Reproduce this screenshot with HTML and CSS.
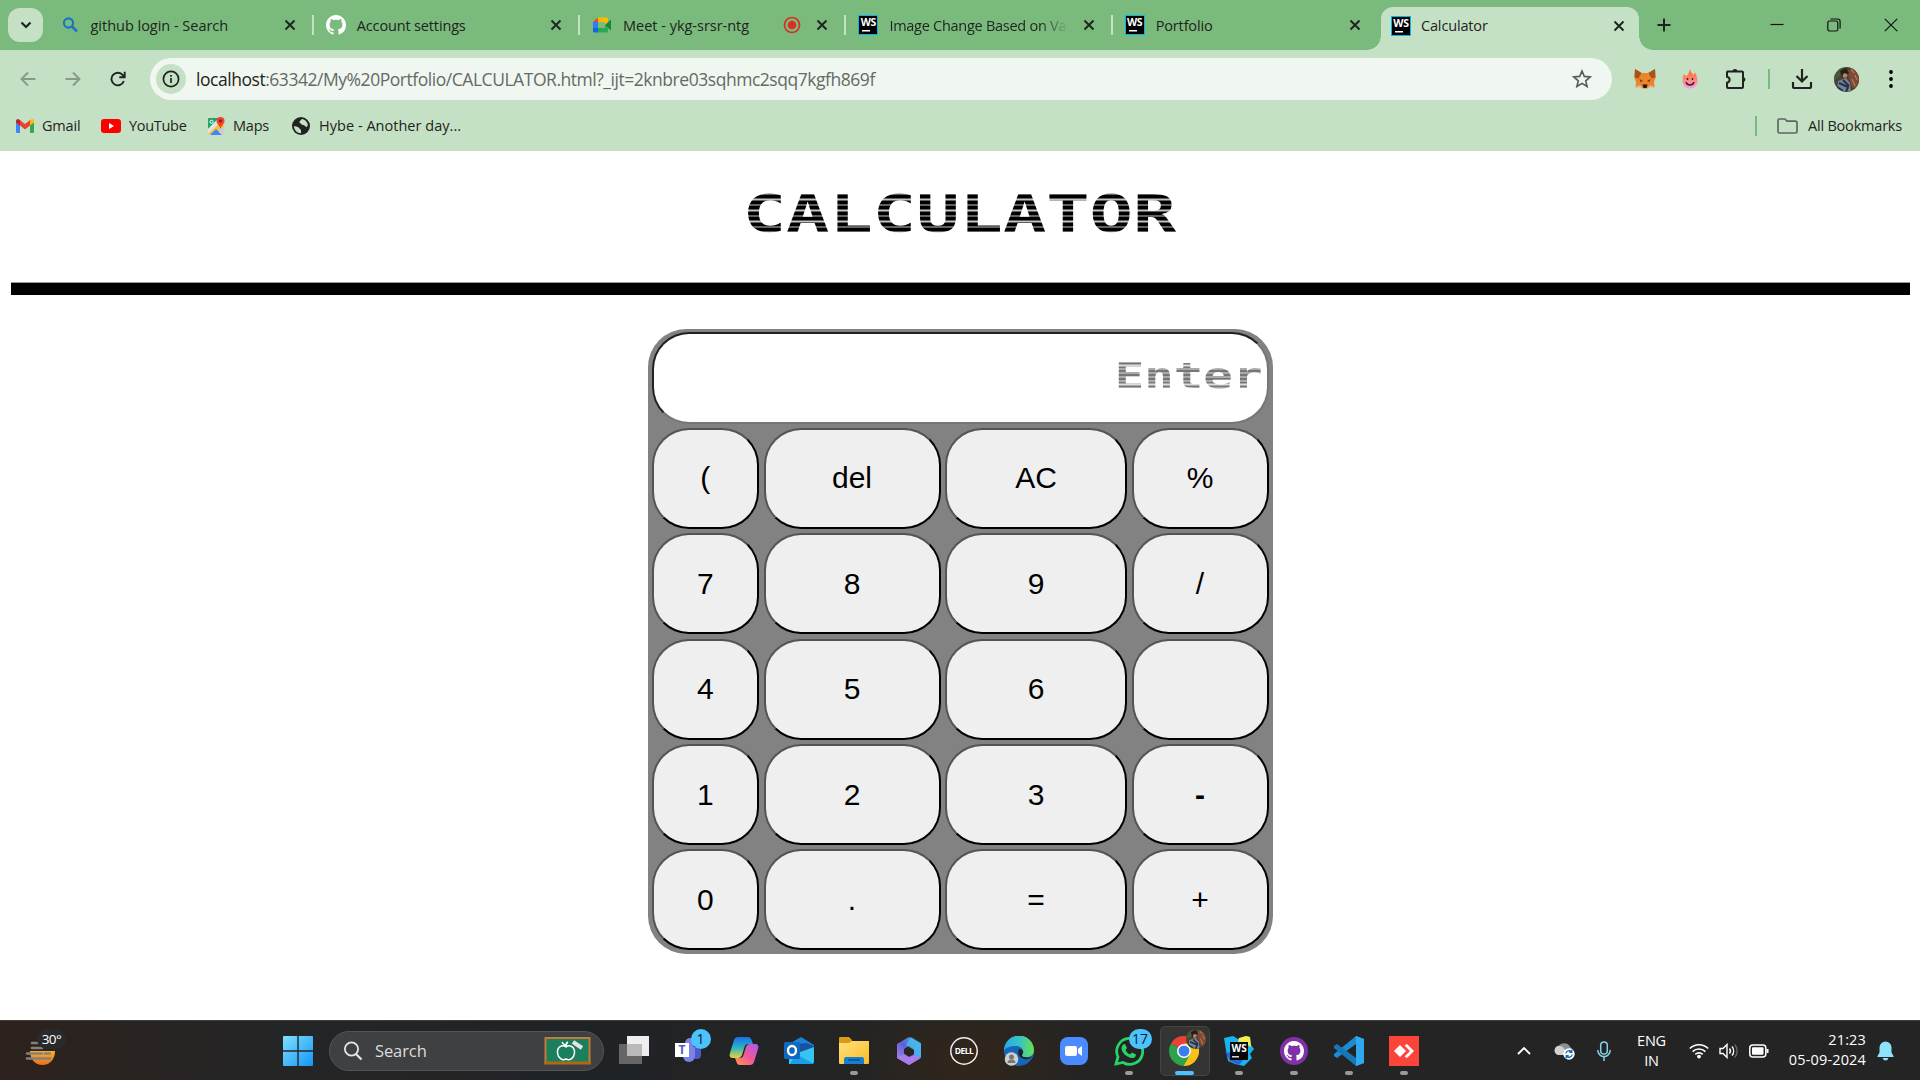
FILE: index.html
```html
<!DOCTYPE html>
<html lang="en">
<head>
<meta charset="utf-8">
<title>Calculator</title>
<link rel="stylesheet" href="styles.css">
</head>
<body>
<svg class="defs" width="0" height="0">
  <defs>
    <symbol id="x" viewBox="0 0 12 12"><path d="M1.5 1.5l9 9M10.5 1.5l-9 9" stroke="#1f2420" stroke-width="1.9" fill="none"/></symbol>
    <symbol id="octocat" viewBox="0 0 16 16"><path d="M8 0C3.58 0 0 3.58 0 8c0 3.54 2.29 6.53 5.47 7.59.4.07.55-.17.55-.38 0-.19-.01-.82-.01-1.49-2.01.37-2.53-.49-2.69-.94-.09-.23-.48-.94-.82-1.13-.28-.15-.68-.52-.01-.53.63-.01 1.08.58 1.23.82.72 1.21 1.87.87 2.33.66.07-.52.28-.87.51-1.07-1.78-.2-3.64-.89-3.64-3.95 0-.87.31-1.59.82-2.15-.08-.2-.36-1.02.08-2.12 0 0 .67-.21 2.2.82.64-.18 1.32-.27 2-.27s1.36.09 2 .27c1.53-1.04 2.2-.82 2.2-.82.44 1.1.16 1.92.08 2.12.51.56.82 1.27.82 2.15 0 3.07-1.87 3.75-3.65 3.95.29.25.54.73.54 1.48 0 1.07-.01 1.93-.01 2.2 0 .21.15.46.55.38A8.01 8.01 0 0016 8c0-4.42-3.58-8-8-8z"/></symbol>
    <linearGradient id="win" x1="0" y1="0" x2="1" y2="1"><stop offset="0" stop-color="#7fe0ff"/><stop offset="1" stop-color="#1296f5"/></linearGradient>
    <linearGradient id="flame" x1="0" y1="0" x2="0" y2="1"><stop offset="0" stop-color="#ff6a1a"/><stop offset=".5" stop-color="#ff8470"/><stop offset="1" stop-color="#ff9ee0"/></linearGradient>
    <linearGradient id="cpA" x1="0" y1="0" x2="0" y2="1"><stop offset="0" stop-color="#1c6fe8"/><stop offset=".5" stop-color="#28b4c8"/><stop offset="1" stop-color="#e8d332"/></linearGradient>
    <linearGradient id="cpB" x1="1" y1="0" x2="0" y2="1"><stop offset="0" stop-color="#a55cf0"/><stop offset=".5" stop-color="#f0569a"/><stop offset="1" stop-color="#ff9a4c"/></linearGradient>
    <linearGradient id="edgeA" x1="0" y1="0" x2="1" y2="0"><stop offset="0" stop-color="#2aa6ea"/><stop offset=".5" stop-color="#36c3c9"/><stop offset="1" stop-color="#68e04e"/></linearGradient>
    <linearGradient id="m3" x1="0" y1="1" x2="1" y2="0"><stop offset="0" stop-color="#b98af0"/><stop offset=".5" stop-color="#5a62d6"/><stop offset="1" stop-color="#3ec7f2"/></linearGradient>
    <linearGradient id="fold" x1="0" y1="0" x2="1" y2="1"><stop offset="0" stop-color="#ffe07a"/><stop offset="1" stop-color="#fbbd28"/></linearGradient>
    <linearGradient id="sun" x1="0" y1="0" x2="0" y2="1"><stop offset="0" stop-color="#f5b52a"/><stop offset="1" stop-color="#ee6f1c"/></linearGradient>
    <clipPath id="round"><circle cx="12.5" cy="12.5" r="12.5"/></clipPath>
    <symbol id="photo" viewBox="0 0 25 25"><g clip-path="url(#round)"><rect width="25" height="25" fill="#4d4030"/><path d="M0 0h9l-3 9-6 5z" fill="#48583a"/><path d="M14 3h11v20l-7-3-3-9z" fill="#7d4a36"/><path d="M6 4l6-3 3 5-7 4z" fill="#242018"/><circle cx="11" cy="8.500" r="2.300" fill="#b98464"/><path d="M4 14l8-3 4 5 1 9H3z" fill="#71809b"/><path d="M5 16l9 4-2 5M9 13l6 6M3 20l6 4" stroke="#2a3040" stroke-width="2" fill="none"/><path d="M17 2l3 4M21 8l2 5M18 12l3 7" stroke="#b5785a" stroke-width="1.300"/></g></symbol>
  </defs>
</svg>

<header class="browser">
  <div class="tabstrip">
    <div class="tab-search"><svg width="12" height="8" viewBox="0 0 12 8"><path d="M1.500 1.500L6 6l4.500-4.500" fill="none" stroke="#1f2420" stroke-width="2.200"/></svg></div>
    <div class="tab first"><svg class="fav" viewBox="0 0 20 20"><circle cx="8.500" cy="8" r="4.600" fill="none" stroke="#1a73c9" stroke-width="2.100"/><path d="M12 11.500l5 5" stroke="#1a73c9" stroke-width="2.500"/></svg><span class="title wide">github login - Search</span><svg class="close"><use href="#x"/></svg></div>
    <div class="tab"><svg class="fav" viewBox="0 0 16 16"><use href="#octocat" fill="#fff"/></svg><span class="title">Account settings</span><svg class="close"><use href="#x"/></svg></div>
    <div class="tab"><svg class="fav" viewBox="0 0 20 20"><path d="M1 7l5-4.500V7z" fill="#ea4335"/><path d="M6 2.500h8.500a1.500 1.500 0 011.500 1.500v4l-3 2V7H6z" fill="#ffba00"/><path d="M1 7h5v6H1z" fill="#2f7cf6"/><path d="M1 13h5v4.500H2.500A1.500 1.500 0 011 16z" fill="#1565e0"/><path d="M6 13h7v-3l3 3v3a1.500 1.500 0 01-1.500 1.500H6z" fill="#2aa952"/><path d="M13 10l6-5.500v11z" fill="#128a3c"/></svg><span class="title wide">Meet - ykg-srsr-ntg</span><svg class="rec" viewBox="0 0 18 18"><circle cx="9" cy="9" r="7.500" fill="none" stroke="#d93025" stroke-width="1.700"/><circle cx="9" cy="9" r="4.300" fill="#d93025"/></svg><svg class="close"><use href="#x"/></svg></div>
    <div class="tab"><span class="ws">WS</span><span class="title fade">Image Change Based on Va</span><svg class="close"><use href="#x"/></svg></div>
    <div class="tab"><span class="ws">WS</span><span class="title">Portfolio</span><svg class="close"><use href="#x"/></svg></div>
    <div class="tab active"><span class="ws">WS</span><span class="title">Calculator</span><svg class="close"><use href="#x"/></svg></div>
    <svg class="plus" width="14" height="14" viewBox="0 0 14 14"><path d="M7 .5v13M.5 7h13" stroke="#1f2420" stroke-width="2"/></svg>
    <div class="window-buttons">
      <svg width="14" height="14" viewBox="0 0 14 14"><path d="M.5 6.500h13" stroke="#111" stroke-width="1.200"/></svg>
      <svg width="14" height="14" viewBox="0 0 14 14"><g fill="none" stroke="#111" stroke-width="1.200"><rect x=".8" y="3" width="10" height="10" rx="1.800"/><path d="M3.500 1h7a2.600 2.600 0 012.600 2.600v7"/></g></svg>
      <svg width="14" height="14" viewBox="0 0 14 14"><path d="M.8.8l12.400 12.400M13.200.8L.8 13.200" stroke="#111" stroke-width="1.200"/></svg>
    </div>
  </div>

  <div class="toolbar">
    <svg class="nav dim" viewBox="0 0 16 16"><path d="M15.500 8H1.500M8 1.500L1.500 8 8 14.500" /></svg>
    <svg class="nav dim" viewBox="0 0 16 16"><path d="M.5 8h14M8 1.500L14.500 8 8 14.500"/></svg>
    <svg class="nav" viewBox="0 0 16 16"><path d="M13.800 10A6.300 6.300 0 1 1 12.800 4.200L14.500 6M14.700.8V6.200H9.300"/></svg>
    <div class="omnibox">
      <span class="info"><svg width="18" height="18" viewBox="0 0 18 18"><circle cx="9" cy="9" r="7.600" fill="none" stroke="#1f2420" stroke-width="1.700"/><path d="M9 8v5M9 5v1.800" stroke="#1f2420" stroke-width="1.700"/></svg></span>
      <span class="url"><b>localhost</b>:63342/My%20Portfolio/CALCULATOR.html?_ijt=2knbre03sqhmc2sqq7kgfh869f</span>
      <svg class="star" width="20" height="20" viewBox="0 0 20 20"><path d="M10 2l2.300 5.400 5.900.5-4.500 3.900 1.400 5.700-5.100-3.100-5.100 3.100 1.400-5.700L1.800 7.900l5.900-.5z" fill="none" stroke="#555b56" stroke-width="1.600"/></svg>
    </div>
    <div class="extensions">
      <svg class="fox" width="22" height="22" viewBox="0 0 22 22"><path d="M1 1l7 4h6l7-4 .5 9-1.500 4 .5 5.500-5-1-2 2h-5l-2-2-5 1 .5-5.500L.5 10z" fill="#ee8429"/><path d="M1 1l6.500 4-3 5.500-4-1zM21 1l-6.500 4 3 5.500 4-1z" fill="#a5541f"/><path d="M5.500 11l3.500 2-2.500 1zM16.500 11L13 13l2.500 1z" fill="#6b3c1c"/><path d="M8.500 16.500h5l-1 3.500h-3z" fill="#1e1712"/><path d="M2 19l4-2 2.500 3M20 19l-4-2-2.500 3" fill="#d7b89f"/></svg>
      <svg class="flame" width="22" height="24" viewBox="0 0 22 24"><path d="M11 2c.6 2.600 2 4.500 3.500 6L16 5.500c1.500 2.500 2.500 5.500 2.500 8.500 0 5-3.500 7.500-7.500 7.500S3.500 19 3.500 14c0-3 .5-5 1.500-7l2.200 2.500C9 7.500 10.500 5 11 2z" fill="url(#flame)"/><path d="M7 15c1 4 7 4 8 0M8.500 11v2M13.500 11v2" stroke="#3a2230" stroke-width="1.400" fill="none"/></svg>
      <svg class="puzzle" width="22" height="22" viewBox="0 0 22 22"><path d="M2.500 3.500h14.500a1 1 0 011 1V19a1 1 0 01-1 1H3a1 1 0 01-1-1v-4.300c3.500-.7 3.500-5.200 0-6V4.500z" fill="none" stroke="#1f2420" stroke-width="2"/><path d="M7.500 3.500a2.500 2.500 0 015 0zM18 9a2.500 2.500 0 010 5z" fill="#1f2420"/></svg>
      <i class="divider"></i>
      <svg class="download" width="22" height="22" viewBox="0 0 22 22"><path d="M11 1v12M5.500 8L11 13.500 16.500 8M2 14v4.500A1.500 1.500 0 003.500 20h15a1.500 1.500 0 001.500-1.500V14" fill="none" stroke="#1f2420" stroke-width="2.200"/></svg>
      <svg class="avatar" width="25" height="25"><use href="#photo"/></svg>
      <svg class="dots" width="6" height="20" viewBox="0 0 6 20"><circle cx="3" cy="3" r="1.900"/><circle cx="3" cy="10" r="1.900"/><circle cx="3" cy="17" r="1.900"/></svg>
    </div>
  </div>

  <nav class="bookmarks">
    <span class="mark gmail"><svg width="18" height="14" viewBox="0 0 18 14"><path d="M0 3v10a1 1 0 001 1h3V5z" fill="#4285f4"/><path d="M18 3v10a1 1 0 01-1 1h-3V5z" fill="#34a853"/><path d="M4 1l5 4 5-4v5.500L9 10.500 4 6.500z" fill="#ea4335"/><path d="M0 2a2 2 0 013-1.600L4 1v5.500L0 3.500z" fill="#c5221f"/><path d="M18 2a2 2 0 00-3-1.600L14 1v5.500l4-3z" fill="#fbbc04"/></svg><span>Gmail</span></span>
    <span class="mark youtube"><svg width="20" height="14" viewBox="0 0 20 14"><rect width="20" height="14" rx="3" fill="#f00"/><path d="M8 4l5 3-5 3z" fill="#fff"/></svg><span>YouTube</span></span>
    <span class="mark maps"><svg width="18" height="18" viewBox="0 0 18 18"><path d="M1.500 1H12L1 12V1.500z" fill="#1fa463"/><path d="M1 12L12 1l5 5v11H1z" fill="#dfe3e6"/><path d="M1 17L14 5l3 3v3l-7 6z" fill="#fbc02d"/><path d="M3 18l6-6 6 6z" fill="#4285f4"/><path d="M17 10v7h-2l-4-5z" fill="#c9ced2"/><path d="M13.500 0A4 4 0 0117.500 4c0 3-3 4-4 8-1-4-4-5-4-8a4 4 0 014-4z" fill="#ea4335"/><circle cx="13.500" cy="4" r="1.400" fill="#7d1a12"/><circle cx="4.500" cy="4.800" r="1.600" fill="none" stroke="#fff"/></svg><span>Maps</span></span>
    <span class="mark hybe"><svg width="18" height="18" viewBox="0 0 18 18"><circle cx="9" cy="9" r="9" fill="#1f2420"/><path d="M2 9l4 1 3 3v3.200C5 16.200 2 13 2 9zM10 2c-1 1-3 2-2.500 4 2 0 1.500 2 3.500 2s2 2 4 2l.8-2C15.500 5 13 2.500 10 2z" fill="#c5e1c5"/></svg><span>Hybe - Another day...</span></span>
    <span class="all"><i class="divider"></i><svg width="21" height="16" viewBox="0 0 21 16"><path d="M2.500 1h5.500l2 2.200h8.500A1.500 1.500 0 0120 4.700v8.800a1.500 1.500 0 01-1.500 1.500h-16A1.500 1.500 0 011 13.500v-11A1.500 1.500 0 012.500 1z" fill="none" stroke="#5f6660" stroke-width="1.700"/></svg><span>All Bookmarks</span></span>
  </nav>
</header>

<main class="page">
  <h1 class="heading"><span class="scan">CALCULATOR</span></h1>
  <div class="rule"></div>
  <section class="calc">
    <div class="display"><span class="scan small">Enter</span></div>
    <button>(</button><button>del</button><button>AC</button><button>%</button>
    <button>7</button><button>8</button><button>9</button><button>/</button>
    <button>4</button><button>5</button><button>6</button><button></button>
    <button>1</button><button>2</button><button>3</button><button class="minus">-</button>
    <button>0</button><button>.</button><button>=</button><button>+</button>
  </section>
</main>

<footer class="taskbar">
  <div class="weather"><svg width="44" height="44" viewBox="0 0 44 44"><path d="M5 22h25c0 8-5 14-12.500 14S5 30 5 22z" fill="url(#sun)"/><path d="M7 14h6M7 19h10M2 24.500h15M2 29.500h23M20 24.500h5" stroke="#85807b" stroke-width="2.600" stroke-linecap="round"/></svg><span class="temp">30°</span></div>
  <div class="start"><svg width="30" height="30" viewBox="0 0 30 30"><path d="M1 0h13.300v14.300H0V1a1 1 0 011-1zM15.700 0H29a1 1 0 011 1v13.300H15.700zM0 15.700h14.300V30H1a1 1 0 01-1-1zM15.700 15.700H30V29a1 1 0 01-1 1H15.700z" fill="url(#win)"/></svg></div>
  <div class="search"><svg width="20" height="20" viewBox="0 0 20 20"><circle cx="8.500" cy="8" r="6.600" fill="none" stroke="#e8e8e8" stroke-width="1.800"/><path d="M13 13l5.500 5.500" stroke="#e8e8e8" stroke-width="2.200"/></svg><span>Search</span>
    <svg width="47" height="28" viewBox="0 0 47 28"><rect x="1.500" y="1" width="44" height="25" fill="#1a7f5c" stroke="#c47a35" stroke-width="2"/><rect y="24.500" width="47" height="3" fill="#b2661a"/><path d="M22 10c-4-3-9 0-8.500 6 .5 5 5 8 8.500 6 4 2 8-1 8.500-6 .5-6-5-9-8.500-6zM22 10c0-3 0-4 2-5M22 8c-2 0-3-1-4-3" fill="none" stroke="#fff" stroke-width="1.500"/><path d="M29 5l9 6" stroke="#e4e4e4" stroke-width="4"/></svg></div>
  <div class="apps">
    <div class="app"><svg viewBox="0 0 30 30"><rect x="0" y="8" width="23" height="20" fill="#666"/><rect x="8" y="0" width="22" height="20" fill="#eee"/><rect x="8" y="8" width="15" height="12" fill="#b9b9b9"/></svg></div>
    <div class="app"><svg viewBox="0 0 30 30"><circle cx="16" cy="7" r="5" fill="#7b83eb"/><rect x="18" y="11" width="9" height="12" rx="4" fill="#5059c9"/><path d="M9 11h12v9a6 6 0 01-6 6 6 6 0 01-6-6z" fill="#7b83eb"/><rect x="1" y="7" width="14" height="14" fill="#fff"/></svg><b class="teams">T</b><span class="badge">1</span></div>
    <div class="app"><svg viewBox="0 0 30 30"><path d="M9 1h10c2 0 3 1 3.500 3L24 8h-5c-2 0-3 1-3.500 3l-2.500 8c-.7 2-2 3-4 3H4c-3 0-4-2-3-5L5 4c.7-2 2-3 4-3z" fill="url(#cpA)"/><path d="M21 29H11c-2 0-3-1-3.500-3L6 22h5c2 0 3-1 3.500-3L17 11c.7-2 2-3 4-3h5c3 0 4 2 3 5l-4 13c-.7 2-2 3-4 3z" fill="url(#cpB)"/></svg></div>
    <div class="app"><svg viewBox="0 0 30 30"><path d="M3 9L17 1l13 8v5H3z" fill="#1684d8"/><path d="M6 9l16-2 8 3v3L14 24z" fill="#1b4fa0"/><path d="M5 28V20l25-9v14a3 3 0 01-3 3z" fill="#36c5f2"/><path d="M12 18l18 10H6z" fill="#1a9fe6"/><rect x="0" y="6" width="16" height="17" rx="1.500" fill="#1068c0"/><ellipse cx="8" cy="14.500" rx="4" ry="4.500" fill="none" stroke="#fff" stroke-width="2.300"/></svg></div>
    <div class="app run"><svg viewBox="0 0 30 30"><path d="M0 2a1 1 0 011-1h9l3 3v5H0z" fill="#d99a15"/><path d="M0 7h10l3-2h17v22a1 1 0 01-1 1H1a1 1 0 01-1-1z" fill="url(#fold)"/><path d="M5 28v-5a2 2 0 012-2h16a2 2 0 012 2v5z" fill="#1480d0"/><path d="M9 24h12" stroke="#0b4f94" stroke-width="1.500"/></svg></div>
    <div class="app"><svg viewBox="0 0 30 30"><path d="M15 1l12 7v14l-12 7L3 22V8zM15 10l-5 3v5l5 3 5-3v-5z" fill="url(#m3)" fill-rule="evenodd"/><path d="M17 1l10 6v14l-7 3v-10l-8-5z" fill="#48bdf0" opacity=".75"/><path d="M3 22l7-4 5 3 6-2 5 3.500L15 29z" fill="#a97ce8"/></svg></div>
    <div class="app"><svg viewBox="0 0 30 30"><circle cx="15" cy="15" r="13.200" fill="none" stroke="#eee" stroke-width="1.500"/></svg><b class="dell">DELL</b></div>
    <div class="app"><svg viewBox="0 0 30 30"><circle cx="15" cy="15" r="15" fill="#1566b8"/><path d="M0 15a15 15 0 0130-1c0 6-5 8-10 7-3-.6-2-2-1-4 1-4-3-7-7-7C6 10 1 12 0 15z" fill="url(#edgeA)"/><path d="M15 13c3 0 5 2 4 4-1 2-2 3.400 1 4 3 .8 5.500.4 8-.5-1.500 2-5 3.500-8 2.500-5-1.500-7-5-5-10z" fill="#242220"/><circle cx="7.500" cy="23" r="6.800" fill="#cfcfcf"/><circle cx="7.500" cy="21" r="2.500" fill="#777"/><path d="M3.500 27a4 3.500 0 018 0z" fill="#777"/></svg></div>
    <div class="app"><svg viewBox="0 0 30 30"><rect x="1" y="1" width="28" height="28" rx="8" fill="#4a8cff"/><rect x="6" y="10" width="12" height="10" rx="2" fill="#fff"/><path d="M19 13l4-3v10l-4-3z" fill="#fff"/></svg></div>
    <div class="app run"><svg viewBox="0 0 30 30"><path d="M2 28l2-7A13 13 0 119 26.500z" fill="none" stroke="#25d366" stroke-width="2.800"/><path d="M11 8l2 4-1.500 2c1 2 2.500 3.500 4.500 4.500l2-2 4 2c0 3-3 4-5 3.500-5-1.500-9-5-9.500-9.500C7.500 10 9 8 11 8z" fill="#25d366"/></svg><span class="badge wide">17</span></div>
    <div class="app run current"><svg viewBox="0 0 30 30"><path d="M15 15L2 7.500A15 15 0 0128 7.500z" fill="#ea4335"/><path d="M15 15L2 7.500A15 15 0 0014.500 30l7-11z" fill="#2ca24c"/><path d="M15 7.500h13A15 15 0 0114.500 30L21.500 18z" fill="#fbc116"/><circle cx="15" cy="15" r="7" fill="#fff"/><circle cx="15" cy="15" r="5.500" fill="#3b7ded"/></svg><svg class="badge-photo"><use href="#photo"/></svg></div>
    <div class="app run"><svg viewBox="0 0 30 30"><path d="M0 2l9-2 5 3 8-3 4 1 1 8 3 4-4 5 2 4-8 8-9-2-7-3L2 14z" fill="#18b4ee"/><path d="M15 2l7-2 4 1 1 10-5-3-8-2z" fill="#f5ee4b"/><path d="M1 15l5 10 9 4 5-6z" fill="#2467d8"/><rect x="6" y="6" width="18" height="18" fill="#080808"/><path d="M8 20.800h7" stroke="#fff" stroke-width="1.300"/></svg><b class="wslabel">WS</b></div>
    <div class="app run"><svg viewBox="0 0 30 30"><circle cx="15" cy="15" r="14" fill="#8230a8"/><svg x="5" y="5" width="20" height="20"><use href="#octocat" fill="#fff"/></svg></svg></div>
    <div class="app run"><svg viewBox="0 0 30 30"><path d="M22 0l8 3v24l-8 3V8L3 22l-3-2v-2z" fill="#1e8ad2"/><path d="M0 10l3-2 19 14v8L0 12z" fill="#1676b8"/><path d="M22 0l8 3v24l-8 3z" fill="#2fa8f0"/></svg></div>
    <div class="app run"><svg viewBox="0 0 30 30"><rect width="30" height="30" fill="#fb443a"/><path d="M11 9l6 6-6 6-6-6z" fill="#fff"/><path d="M15.500 9.500L18 8l7 7-7 7-2.500-1.500L21 15z" fill="#fff"/></svg></div>
  </div>
  <div class="tray">
    <svg class="t-up" width="14" height="9" viewBox="0 0 14 9"><path d="M1 8l6-6 6 6" fill="none" stroke="#fff" stroke-width="1.900"/></svg>
    <svg class="t-cloud" width="21" height="18" viewBox="0 0 21 18"><path d="M5 13a4.800 4.800 0 010-9.500C8 .5 14 0 16.500 5.500c3 1 3.500 7.500 0 7.500z" fill="#8f8f8f"/><path d="M4.500 13a4.500 4.500 0 011-9c4 0 4 3 7 5v4z" fill="#d2d2d2"/><circle cx="15" cy="12" r="5.700" fill="#fff"/><path d="M11.800 11.500a3.200 3.200 0 015.500-1.700M18.200 12.500a3.200 3.200 0 01-5.500 1.700M17.800 7.800v2.500h-2.500M12.200 16.200v-2.500h2.500" fill="none" stroke="#1766c2" stroke-width="1.300"/></svg>
    <svg class="t-mic" width="14" height="20" viewBox="0 0 14 20"><g fill="none" stroke="#86d3ea" stroke-width="1.500"><rect x="3.700" y="1" width="6.600" height="12" rx="3.300"/><path d="M.8 9a6.200 6.600 0 0012.400 0M7 15.800V20"/></g></svg>
    <div class="lang">ENG<br>IN</div>
    <svg class="t-wifi" width="20" height="16" viewBox="0 0 20 16"><g fill="none" stroke="#fff" stroke-width="1.600"><path d="M.8 5.500a13 13 0 0118.400 0M3.600 8.600a9 9 0 0112.800 0M6.300 11.400a5.300 5.300 0 017.400 0"/></g><circle cx="10" cy="13.600" r="1.900" fill="#fff"/></svg>
    <svg class="t-vol" width="20" height="16" viewBox="0 0 20 16"><g fill="none" stroke="#fff" stroke-width="1.400"><path d="M1 5.500h3L8 1.500v13l-4-4H1z"/><path d="M10.500 5.500a4 4 0 010 5M13 3.500a7 7 0 010 9"/><path d="M15.700 1.500a10 10 0 010 13" stroke="#666"/></g></svg>
    <svg class="t-bat" width="20" height="14" viewBox="0 0 20 14"><rect x=".8" y="1" width="16" height="12" rx="3" fill="none" stroke="#fff" stroke-width="1.500"/><rect x="3" y="3.200" width="11.500" height="7.600" rx="1" fill="#fff"/><path d="M18.500 5v4" stroke="#fff" stroke-width="2"/></svg>
    <div class="clock">21:23<br>05-09-2024</div>
    <svg class="t-bell" width="17" height="20" viewBox="0 0 17 20"><path d="M8.500.5a6 6 0 016 6v5l2 3.500v1H.5v-1l2-3.500v-5a6 6 0 016-6zM5.800 17h5.400a2.700 2.500 0 01-5.400 0z" fill="#8fe2fb"/></svg>
  </div>
</footer>
</body>
</html>
```
FILE: styles.css
```css
* { box-sizing: border-box; }
body { margin: 0; width: 1920px; height: 1080px; overflow: hidden; display: flex; flex-direction: column; background: #fff; font-family: "Open Sans", "Noto Sans", sans-serif; color: #1f2420; }
svg { display: block; flex: none; }
.defs { position: absolute; }
.browser { height: 151px; flex: none; background: #c5e1c5; }

.tabstrip { height: 50px; background: #7aba7c; display: flex; align-items: center; padding-left: 8px; }
.tab-search { width: 35px; height: 34px; border-radius: 12px; background: #c5e1c5; display: flex; align-items: center; justify-content: center; }
.tab { width: 266.300px; height: 20px; display: flex; align-items: center; border-left: 2px solid #c5e1c5; padding-left: 12px; padding-right: 16px; flex: none; }
.tab.first { margin-left: 2.500px; border-left-color: transparent; }
.tab .fav { width: 20px; height: 20px; }
.title { flex: 1; min-width: 0; margin-left: 11px; padding-top: 1px; font-size: 14.500px; letter-spacing: -.15px; white-space: nowrap; line-height: 24px; }
.title.wide { letter-spacing: -.02px; }
.title.fade { flex: 0 0 182px; letter-spacing: -.27px; -webkit-mask-image: linear-gradient(90deg, #000 152px, transparent 179px); mask-image: linear-gradient(90deg, #000 152px, transparent 179px); }
.close { width: 12px; height: 12px; margin-left: auto; }
.rec { width: 18px; height: 18px; margin-right: 15px; }
.ws { width: 20px; height: 20px; flex: none; border: 1px solid #08b5e8; background: linear-gradient(#fff, #fff) 3px 14px / 8px 1.500px no-repeat #000; color: #fff; font: bold 10.500px/13px "Open Sans", sans-serif; text-align: center; letter-spacing: -.3px; }
.tab.active { height: 43px; align-self: flex-end; width: 258px; border: 0; border-radius: 12px 12px 0 0; background: #c5e1c5; margin-left: 4px; padding: 0 14px 5px 10px; position: relative; }
.tab.active::before, .tab.active::after { content: ""; position: absolute; bottom: 0; width: 14px; height: 14px; }
.tab.active::before { left: -14px; background: radial-gradient(circle at 0 0, transparent 13.500px, #c5e1c5 14px); }
.tab.active::after { right: -14px; background: radial-gradient(circle at 100% 0, transparent 13.500px, #c5e1c5 14px); }
.tab.active .title { margin-left: 10px; padding-top: 0; }
.plus { margin-left: 18px; }
.window-buttons { display: flex; gap: 43px; margin-left: auto; padding-right: 22px; }

.toolbar { height: 58px; display: flex; align-items: center; padding-left: 20px; }
.nav { width: 16px; height: 16px; margin-right: 29px; fill: none; stroke: #1f2420; stroke-width: 1.900; }
.nav.dim { stroke: #879a88; }
.omnibox { width: 1462px; flex: none; height: 42px; border-radius: 21px; background: #f0f7f0; display: flex; align-items: center; padding: 0 20px 0 6px; margin-left: -5px; }
.info { width: 30px; height: 30px; border-radius: 50%; background: #c5e1c5; display: flex; align-items: center; justify-content: center; }
.url { margin-left: 10px; font-size: 17.500px; letter-spacing: -.46px; color: #646a65; white-space: nowrap; }
.url b { font-weight: 400; color: #1f2420; }
.star { margin-left: auto; }
.extensions { flex: 1; display: flex; align-items: center; padding-left: 22px; }
.flame { margin-left: 23px; }
.puzzle { margin-left: 24px; }
.extensions .divider { margin: 0 21px; }
.avatar { margin-left: 21px; }
.dots { margin-left: 29px; }
.divider { width: 2px; height: 20px; background: #7aba7c; }

.bookmarks { height: 36px; display: flex; align-items: center; padding: 0 18px 0 16px; font-size: 14.500px; letter-spacing: -.2px; }
.bookmarks span span { padding-bottom: 2px; }
.mark { display: flex; align-items: center; gap: 8px; white-space: nowrap; }
.gmail { width: 85px; }
.youtube { width: 106px; letter-spacing: -.3px; }
.maps { width: 85px; }
.hybe { gap: 9px; letter-spacing: .03px; }
.all { margin-left: auto; display: flex; align-items: center; gap: 10px; white-space: nowrap; }
.all .divider { margin-right: 10px; }

.page { height: 869px; flex: none; padding: 0 10.500px; }
.heading { margin: 0; height: 131px; padding-top: 34px; text-align: center; line-height: 60px; font-weight: bold; }
.scan { display: inline-block; font-family: "DejaVu Sans Mono", monospace; font-weight: bold; font-size: 51px; line-height: 60px; transform: scaleX(1.412); color: transparent; background: repeating-linear-gradient(#000 0 4px, #c4c4c4 4px 5.500px) 0 4.500px; -webkit-background-clip: text; background-clip: text; }
.rule { height: 13px; background: #000; border-top: 1px solid #999; }
.calc { width: 625px; height: 625px; margin: 34px auto 0; background: #828282; border-radius: 38px; padding: 3px 4px; display: grid; grid-template-columns: 107.500px 177px 182px 137px; grid-template-rows: 91.500px repeat(5, 101px); column-gap: 4.500px; row-gap: 4.400px; }
.display { grid-column: 1 / -1; background: #fff; border: 2px inset #767676; border-radius: 37px; display: flex; align-items: center; justify-content: flex-end; padding-right: 4px; }
.scan.small { font-size: 35.700px; line-height: 40px; margin-bottom: 3px; transform-origin: 100% 50%; transform: scaleX(1.375); background: repeating-linear-gradient(#767676 0 2.700px, #ddd 2.700px 3.800px) 0 2.500px; -webkit-background-clip: text; background-clip: text; }
.calc button { margin: 0; padding: 0; border: 2px outset #000; border-radius: 37px; background: #efefef; color: #000; font: 30px "Liberation Sans", Arial, sans-serif; }
.calc .minus { font-weight: bold; }

.taskbar { height: 60px; flex: none; display: flex; align-items: center; background: radial-gradient(ellipse 120px 80px at 970px 40px, #32261a, transparent), linear-gradient(90deg, #2d221d, #242526 280px, #202326 600px, #242424 900px, #242424); border-top: 1px solid #3c3e3c; color: #fff; }
.weather { width: 282.500px; padding-left: 25px; position: relative; }
.temp { position: absolute; left: 37px; top: 0; width: 29px; height: 20px; border-radius: 10px; background: #292a2b; font-size: 13.500px; line-height: 20px; text-align: center; letter-spacing: -.5px; }
.start { width: 46.500px; }
.search { width: 275px; height: 40px; border-radius: 20px; background: #3f4042; border: 1px solid #545557; display: flex; align-items: center; padding: 0 12px 0 13px; font-size: 16.500px; color: #dcdcdc; }
.search span { flex: 1; margin-left: 12px; letter-spacing: -.1px; }
.apps { display: flex; margin-left: 2.500px; }
.app { width: 55px; height: 50px; display: flex; align-items: center; justify-content: center; position: relative; }
.app > svg { width: 30px; height: 30px; }
.run::after { content: ""; position: absolute; bottom: 1px; left: 23px; width: 8px; height: 4px; border-radius: 2px; background: #9a9a9a; }
.current::before { content: ""; position: absolute; inset: 0 2px 0 3px; border-radius: 5px; background: #343434; border: 1px solid #444; }
.current > svg { position: relative; }
.current::after { left: 18px; width: 19px; background: #4cc2ff; }
.badge { position: absolute; left: 29px; top: 3px; width: 20px; height: 20px; border-radius: 10px; background: #4cc2ff; color: #10202a; font-size: 14px; line-height: 20px; text-align: center; }
.badge.wide { left: 27px; width: 23px; }
.app > .badge-photo { position: absolute; left: 29px; top: 3px; width: 20px; height: 20px; }
.teams { position: absolute; left: 17px; top: 15px; font: bold 12px/18px "Open Sans", sans-serif; color: #5059c9; }
.dell { position: absolute; left: 0; width: 55px; text-align: center; font: bold 8.500px/50px "Open Sans", sans-serif; letter-spacing: -.5px; }
.wslabel { position: absolute; left: 20px; top: 15px; font: bold 10px/14px "Open Sans", sans-serif; }
.tray { flex: 1; display: flex; align-items: center; padding-left: 85px; }
.t-cloud { margin-left: 23px; }
.t-mic { margin-left: 22px; }
.lang { margin-left: 26px; width: 30px; text-align: center; font-size: 14.500px; line-height: 20px; letter-spacing: -.2px; }
.t-wifi { margin-left: 22px; }
.t-vol { margin-left: 10px; }
.t-bat { margin-left: 10px; }
.clock { margin-left: auto; text-align: right; font-size: 14.500px; line-height: 20px; letter-spacing: .15px; padding-bottom: 2px; }
.t-bell { margin-left: 11px; margin-right: 26px; }
```
